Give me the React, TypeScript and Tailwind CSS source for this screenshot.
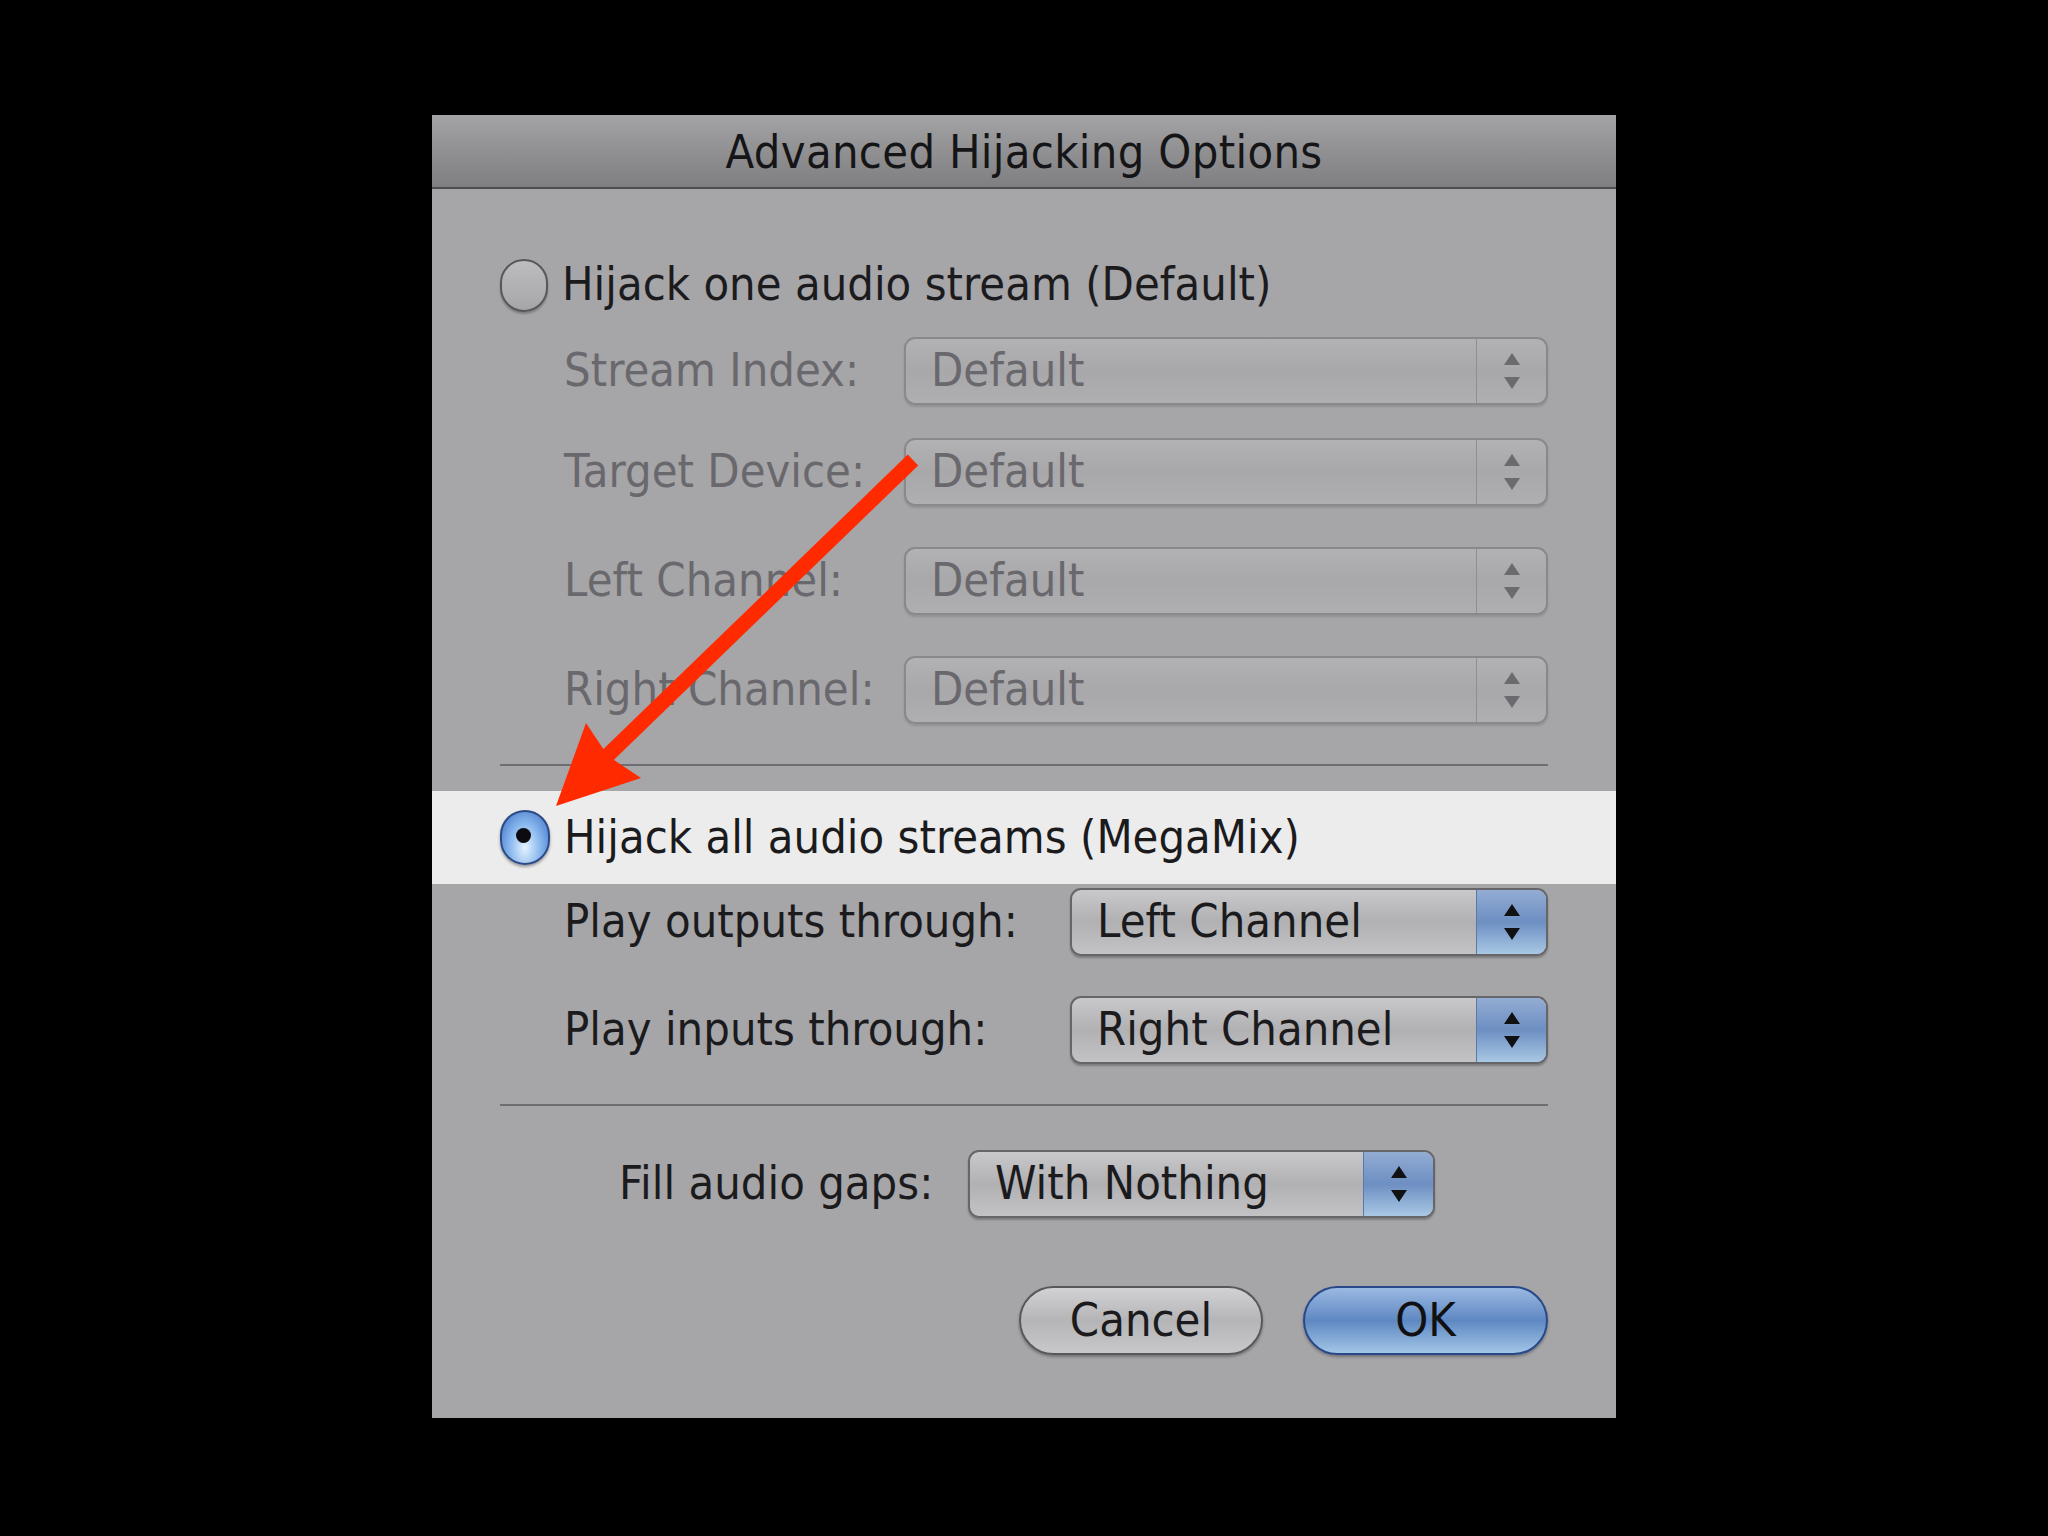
import React from "react";

const txt = "inline-block origin-center scale-y-[1.1] text-[42px] leading-none";

const Stepper: React.FC<{ active: boolean }> = ({ active }) => {
  const arrow = active ? "#111114" : "#6b6a6f";
  return (
    <div
      className={
        active
          ? "flex h-full w-[70px] shrink-0 flex-col items-center justify-center gap-[12px] rounded-r-[9px] border-l border-[#5a78a8] bg-linear-to-b from-[#93acd3] via-[#6d8fc2] to-[#a9c8e4]"
          : "flex h-full w-[70px] shrink-0 flex-col items-center justify-center gap-[12px] rounded-r-[9px] border-l border-[#8f8e92]"
      }
    >
      <svg width="16" height="12" viewBox="0 0 16 12">
        <path d="M8 0 L16 12 L0 12 Z" fill={arrow} />
      </svg>
      <svg width="16" height="12" viewBox="0 0 16 12">
        <path d="M0 0 L16 0 L8 12 Z" fill={arrow} />
      </svg>
    </div>
  );
};

const Popup: React.FC<{ value: string; width: string; active?: boolean }> = ({ value, width, active }) => (
  <div
    className={
      active
        ? `flex h-[68px] ${width} items-center rounded-[11px] border-2 border-[#66666a] bg-linear-to-b from-[#c9c9cb] via-[#b1b0b3] to-[#c3c3c5] shadow-[0_2px_2px_rgba(0,0,0,0.25)]`
        : `flex h-[68px] ${width} items-center rounded-[11px] border-2 border-[#89888c] bg-linear-to-b from-[#b2b1b4] via-[#a8a7aa] to-[#afaeb1] shadow-[0_2px_2px_rgba(0,0,0,0.12)]`
    }
  >
    <div className="flex-1 pl-[25px]">
      <span className={active ? `${txt} text-[#1b1b1d]` : `${txt} text-[#69686d]`}>{value}</span>
    </div>
    <Stepper active={!!active} />
  </div>
);

const Row: React.FC<{ label: string; labelWidth: string; children: React.ReactNode; className: string; active?: boolean }> = ({
  label,
  labelWidth,
  children,
  className,
  active,
}) => (
  <div className={`flex items-center pl-[132px] ${className}`}>
    <div className={`${labelWidth} shrink-0`}>
      <span className={active ? `${txt} text-[#1b1b1d]` : `${txt} text-[#69686d]`}>{label}</span>
    </div>
    {children}
  </div>
);

export default function App() {
  return (
    <div className="h-[1536px] w-[2048px] bg-black pl-[432px] pt-[115px] font-['DejaVu_Sans',sans-serif]">
      <div className="relative flex h-[1303px] w-[1184px] flex-col bg-[#a6a5a8]">
        {/* title bar */}
        <div className="flex h-[74px] shrink-0 items-center justify-center border-b-2 border-[#4d4d4f] bg-linear-to-b from-[#a3a3a5] to-[#7f7f81] pt-[4px]">
          <span className={`${txt} tracking-[0.3px] text-[#151517]`}>Advanced Hijacking Options</span>
        </div>

        <div className="mt-[71px] flex h-[50px] items-center gap-[14px] pl-[68px]">
          <div className="h-[53px] w-[48px] rounded-full border-2 border-[#58585b] bg-linear-to-b from-[#bdbcbf] to-[#a6a5a8] shadow-[0_2px_2px_rgba(0,0,0,0.25)]" />
          <span className={`${txt} text-[#1b1b1d]`}>Hijack one audio stream (Default)</span>
        </div>

        <Row label="Stream Index:" labelWidth="w-[340px]" className="mt-[27px]">
          <Popup value="Default" width="w-[644px]" />
        </Row>
        <Row label="Target Device:" labelWidth="w-[340px]" className="mt-[33px]">
          <Popup value="Default" width="w-[644px]" />
        </Row>
        <Row label="Left Channel:" labelWidth="w-[340px]" className="mt-[41px]">
          <Popup value="Default" width="w-[644px]" />
        </Row>
        <Row label="Right Channel:" labelWidth="w-[340px]" className="mt-[41px]">
          <Popup value="Default" width="w-[644px]" />
        </Row>

        <div className="mx-[68px] mt-[40px] h-[2px] bg-[#6f6e72]" />

        <div className="mt-[25px] flex h-[93px] items-center gap-[14px] bg-[#ececec] pl-[68px]">
          <div className="flex h-[55px] w-[50px] items-center justify-center rounded-full border-2 border-[#2c4a86] bg-radial-[at_50%_70%] from-[#e4f2ff] via-[#84b4ec] to-[#3b6cc2] shadow-[0_2px_3px_rgba(0,0,0,0.35)]">
            <div className="mb-[4px] mr-[3px] h-[15px] w-[15px] rounded-full bg-[#0b0b10]" />
          </div>
          <span className={`${txt} text-[#1b1b1d]`}>Hijack all audio streams (MegaMix)</span>
        </div>

        <Row label="Play outputs through:" labelWidth="w-[506px]" className="mt-[4px]" active>
          <Popup value="Left Channel" width="w-[478px]" active />
        </Row>
        <Row label="Play inputs through:" labelWidth="w-[506px]" className="mt-[40px]" active>
          <Popup value="Right Channel" width="w-[478px]" active />
        </Row>

        <div className="mx-[68px] mt-[40px] h-[2px] bg-[#6f6e72]" />

        <div className="mt-[44px] flex items-center pl-[187px]">
          <div className="w-[349px] shrink-0">
            <span className={`${txt} text-[#1b1b1d]`}>Fill audio gaps:</span>
          </div>
          <Popup value="With Nothing" width="w-[467px]" active />
        </div>

        <div className="mt-[68px] flex justify-end gap-[40px] pr-[68px]">
          <button className="h-[69px] w-[244px] rounded-full border-2 border-[#58585b] bg-linear-to-b from-[#d2d2d4] via-[#b5b5b7] to-[#c8c8ca] text-[#1b1b1d] shadow-[0_2px_3px_rgba(0,0,0,0.3)]">
            <span className={txt}>Cancel</span>
          </button>
          <button className="h-[69px] w-[245px] rounded-full border-2 border-[#28488a] bg-linear-to-b from-[#9bb9e2] via-[#5f88c2] to-[#a2c6e6] text-[#111114] shadow-[0_2px_3px_rgba(0,0,0,0.3)]">
            <span className={txt}>OK</span>
          </button>
        </div>

        {/* red annotation arrow drawn over the dialog */}
        <svg className="pointer-events-none absolute inset-0" width="1184" height="1303" viewBox="0 0 1184 1303">
          <line x1="481" y1="345" x2="172" y2="644" stroke="#ff2a00" strokeWidth="15" strokeLinecap="butt" />
          <path d="M124 691 L154 608 L176 641 L209 663 Z" fill="#ff2a00" />
        </svg>
      </div>
    </div>
  );
}
